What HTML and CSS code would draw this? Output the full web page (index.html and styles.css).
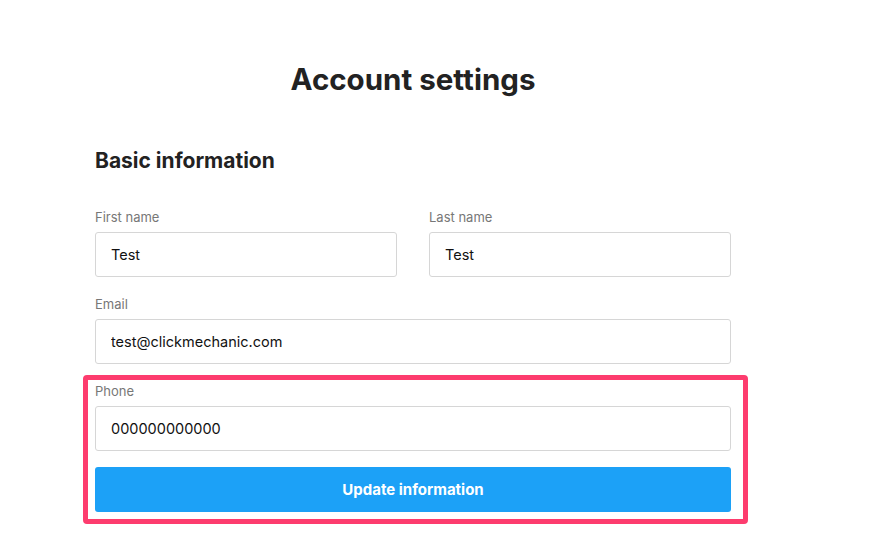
FILE: index.html
```html
<!DOCTYPE html>
<html lang="en">
<head>
    <meta charset="UTF-8">
    <meta name="viewport" content="width=device-width, initial-scale=1.0">
    <title>Account settings</title>
    <link rel="stylesheet" href="styles.css">
</head>
<body>

<div class="page">
    <h1 class="page-title">Account settings</h1>

    <form class="settings-form">
        <h2 class="section-title">Basic information</h2>

        <div class="row">
            <div class="field">
                <label for="firstName">First name</label>
                <input id="firstName" type="text" value="Test">
            </div>
            <div class="field">
                <label for="lastName">Last name</label>
                <input id="lastName" type="text" value="Test">
            </div>
        </div>

        <div class="field">
            <label for="email">Email</label>
            <input id="email" type="email" value="test@clickmechanic.com">
        </div>

        <div class="phone-group highlight">
            <div class="field">
                <label for="phone">Phone</label>
                <input id="phone" type="tel" value="000000000000">
            </div>
            <button type="button" class="submit-btn">Update information</button>
        </div>
    </form>
</div>

</body>
</html>
```

FILE: styles.css
```css
body {
    margin: 0;
    padding: 0;
    background: #fff;
    color: #222;
    font-family: 'Inter', 'Liberation Sans', sans-serif;
}
.page {
    width: 636px;
    margin-left: 95px;
    padding-top: 61px;
    padding-bottom: 20px;
}
.page-title {
    margin: 0;
    font-size: 29.5px;
    line-height: 36px;
    font-weight: 700;
    text-align: center;
    color: #222;
}
.section-title {
    margin: 50px 0 0;
    font-size: 21px;
    line-height: 28px;
    font-weight: 700;
    color: #222;
}
.settings-form {
    display: flex;
    flex-direction: column;
}
.row {
    display: flex;
    gap: 32px;
    margin-top: 34px;
}
.row .field {
    flex: 1;
}
.field {
    display: flex;
    flex-direction: column;
}
.settings-form > .field,
.phone-group {
    margin-top: 19px;
}
.field label {
    font-size: 13px;
    line-height: 17px;
    color: #777;
    margin-bottom: 6px;
}
.field input {
    box-sizing: border-box;
    height: 45px;
    padding: 0 15px;
    border: 1px solid #d6d6d6;
    border-radius: 3px;
    font-family: 'Inter', 'Liberation Sans', sans-serif;
    font-size: 14.5px;
    color: #111;
    background: #fff;
}
.phone-group {
    position: relative;
    display: flex;
    flex-direction: column;
}
/* pink frame drawn round the phone field and button */
.highlight::after {
    content: '';
    position: absolute;
    top: -8px;
    left: -12px;
    right: -17px;
    bottom: -12px;
    border: 5px solid #fd3c6e;
    border-radius: 4px;
    pointer-events: none;
}
.submit-btn {
    margin-top: 16px;
    height: 45px;
    border: none;
    border-radius: 3px;
    background-color: #1ca1f7;
    color: #fff;
    font-family: 'Inter', 'Liberation Sans', sans-serif;
    font-size: 15px;
    font-weight: 700;
    cursor: pointer;
}
```
